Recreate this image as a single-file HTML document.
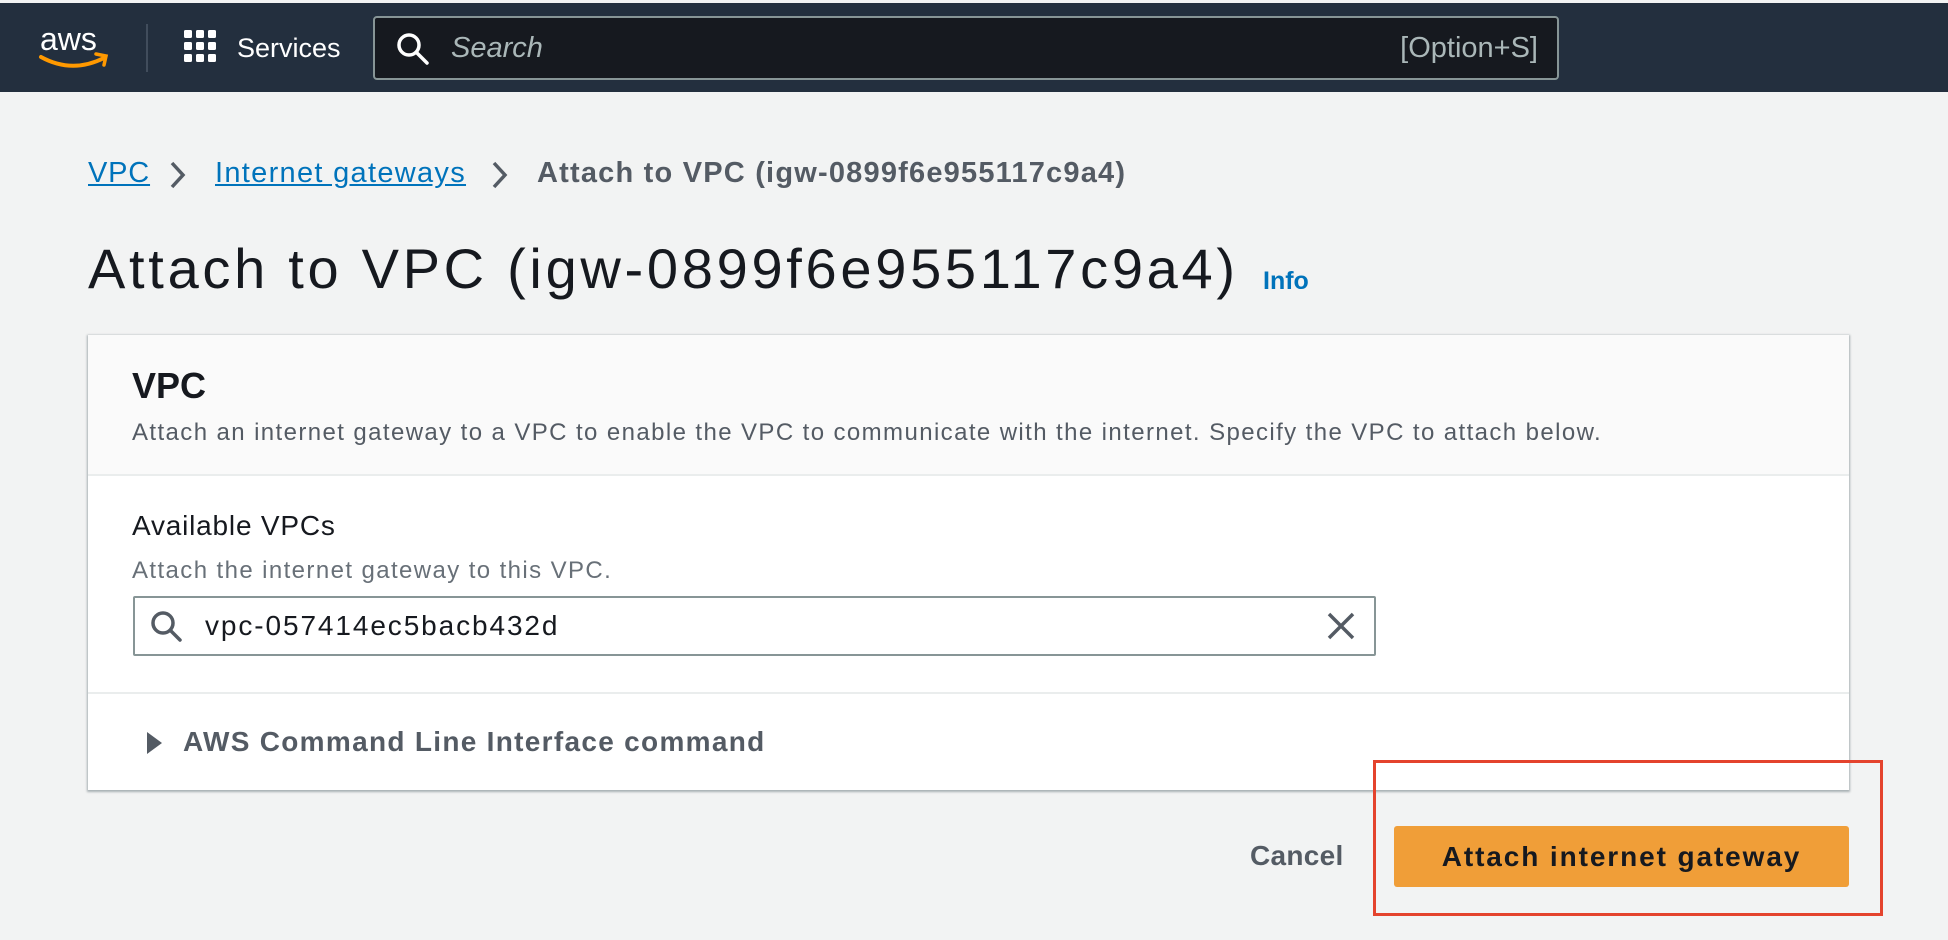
<!DOCTYPE html>
<html><head><meta charset="utf-8"><style>
*{box-sizing:border-box;margin:0;padding:0}
body{width:1948px;height:940px;background:#f2f3f3;font-family:"Liberation Sans",sans-serif;position:relative;overflow:hidden;color:#16191f}
.abs{position:absolute;white-space:nowrap}
.nav{position:absolute;left:0;top:3px;width:1948px;height:89px;background:#232f3e}
.search{position:absolute;left:373px;top:16px;width:1186px;height:64px;background:#16191f;border:2px solid #879596;border-radius:4px}
a{color:#0073bb;text-decoration:underline}
.card{position:absolute;left:88px;top:335px;width:1761px;height:455px;background:#fff;box-shadow:0 1px 2px 1px rgba(0,28,36,.3)}
</style></head><body>
<div class="nav"></div>
<svg class="abs" style="left:38px;top:22px" width="74" height="50" viewBox="0 0 74 50">
<text x="2" y="28" font-family="Liberation Sans" font-size="32" fill="#fff">aws</text>
<path d="M3 35 Q34 52 66 36" stroke="#f90" stroke-width="4" fill="none" stroke-linecap="round"/>
<path d="M58 32 L68 34 L66 43" stroke="#f90" stroke-width="3.5" fill="none" stroke-linecap="round"/>
</svg>
<div class="abs" style="left:146px;top:24px;width:2px;height:48px;background:#414d5c"></div>
<svg class="abs" style="left:184px;top:30px" width="36" height="36">
<g fill="#fff"><rect x="0" y="0" width="8" height="8" rx="1.5"/><rect x="12" y="0" width="8" height="8" rx="1.5"/><rect x="24" y="0" width="8" height="8" rx="1.5"/><rect x="0" y="12" width="8" height="8" rx="1.5"/><rect x="12" y="12" width="8" height="8" rx="1.5"/><rect x="24" y="12" width="8" height="8" rx="1.5"/><rect x="0" y="24" width="8" height="8" rx="1.5"/><rect x="12" y="24" width="8" height="8" rx="1.5"/><rect x="24" y="24" width="8" height="8" rx="1.5"/></g></svg>
<div class="abs" style="left:237px;top:33px;font-size:27px;color:#fff">Services</div>
<div class="search"></div>
<svg class="abs" style="left:396px;top:32px" width="34" height="34"><circle cx="13" cy="13" r="10" stroke="#fff" stroke-width="3.5" fill="none"/><path d="M21 21 L31 31" stroke="#fff" stroke-width="3.5" stroke-linecap="round"/></svg>
<div class="abs" style="left:451px;top:32px;font-size:29px;color:#aab7b8;font-style:italic">Search</div>
<div class="abs" style="right:410px;top:32px;font-size:29px;color:#aab7b8">[Option+S]</div>

<div class="abs" style="left:88px;top:157px;font-size:29px;letter-spacing:.8px"><a>VPC</a></div>
<svg class="abs" style="left:168px;top:160px" width="20" height="30"><path d="M4 3 L15 15 L4 27" stroke="#545b64" stroke-width="3.5" fill="none"/></svg>
<div class="abs" style="left:215px;top:157px;font-size:29px;letter-spacing:1.3px"><a>Internet gateways</a></div>
<svg class="abs" style="left:490px;top:160px" width="20" height="30"><path d="M4 3 L15 15 L4 27" stroke="#545b64" stroke-width="3.5" fill="none"/></svg>
<div class="abs" style="left:537px;top:157px;font-size:29px;font-weight:bold;color:#545b64;letter-spacing:1.2px">Attach to VPC (igw-0899f6e955117c9a4)</div>

<div class="abs" style="left:88px;top:236px;font-size:56px;letter-spacing:3.7px">Attach to VPC (igw-0899f6e955117c9a4)</div>
<div class="abs" style="left:1263px;top:267px;font-size:25px;font-weight:bold;color:#0073bb">Info</div>

<div class="card">
<div style="position:absolute;left:0;top:0;width:100%;height:141px;background:#fafafa;border-bottom:2px solid #eaeded"></div>
<div class="abs" style="left:44px;top:30px;font-size:36px;font-weight:bold">VPC</div>
<div class="abs" style="left:44px;top:84px;font-size:24px;color:#545b64;letter-spacing:1.4px">Attach an internet gateway to a VPC to enable the VPC to communicate with the internet. Specify the VPC to attach below.</div>
<div class="abs" style="left:44px;top:175px;font-size:28px;letter-spacing:.8px">Available VPCs</div>
<div class="abs" style="left:44px;top:222px;font-size:24px;color:#687078;letter-spacing:1.4px">Attach the internet gateway to this VPC.</div>
<div style="position:absolute;left:45px;top:261px;width:1243px;height:60px;border:2px solid #879596;border-radius:2px"></div>
<svg class="abs" style="left:62px;top:275px" width="34" height="34"><circle cx="13" cy="13" r="10" stroke="#545b64" stroke-width="3.5" fill="none"/><path d="M21 21 L30 30" stroke="#545b64" stroke-width="3.5" stroke-linecap="round"/></svg>
<div class="abs" style="left:117px;top:275px;font-size:28px;letter-spacing:1.9px">vpc-057414ec5bacb432d</div>
<svg class="abs" style="left:1238px;top:276px" width="30" height="30"><path d="M3 3 L27 27 M27 3 L3 27" stroke="#545b64" stroke-width="3.5"/></svg>
<div style="position:absolute;left:0;top:357px;width:100%;height:2px;background:#eaeded"></div>
<svg class="abs" style="left:57px;top:395px" width="20" height="26"><path d="M2 2 L17 13 L2 24Z" fill="#545b64"/></svg>
<div class="abs" style="left:95px;top:391px;font-size:28px;font-weight:bold;color:#545b64;letter-spacing:1.3px">AWS Command Line Interface command</div>
</div>

<div class="abs" style="left:1250px;top:840px;font-size:28px;font-weight:bold;color:#545b64;letter-spacing:.3px">Cancel</div>
<div class="abs" style="left:1394px;top:826px;width:455px;height:61px;background:#f09e38;border-radius:3px;font-size:28px;font-weight:bold;text-align:center;line-height:61px;color:#16191f;letter-spacing:1.9px">Attach internet gateway</div>
<div class="abs" style="left:1373px;top:760px;width:510px;height:156px;border:3px solid #e4432d"></div>
</body></html>
